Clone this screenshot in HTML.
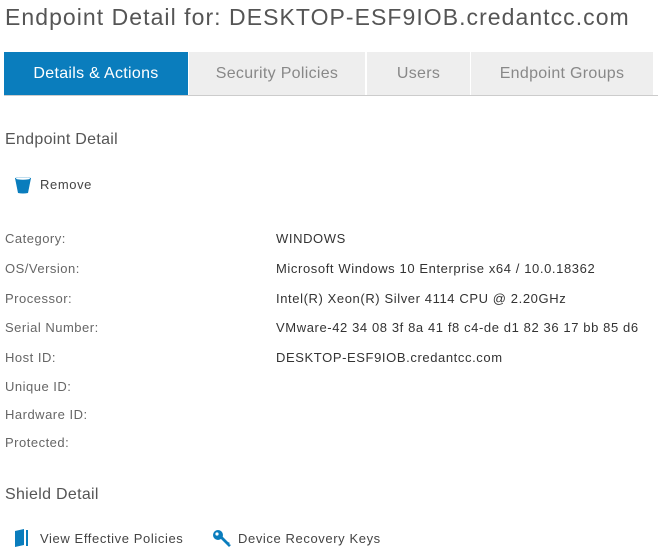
<!DOCTYPE html><html><head><style>
body{margin:0;width:658px;height:552px;background:#fff;font-family:"Liberation Sans",sans-serif;color:#444;position:relative;overflow:hidden}
.a{position:absolute;white-space:nowrap}
h1{position:absolute;left:5px;top:4px;margin:0;font-weight:normal;font-size:23px;color:#555;letter-spacing:1.05px}
.tab{position:absolute;top:52px;height:44px;line-height:44px;text-align:center;font-size:16px;background:#eee;color:#888;letter-spacing:0.3px}
.l{font-size:13px;color:#666;letter-spacing:0.5px}
.v{font-size:13px;color:#333;left:276px;letter-spacing:0.6px}
</style></head><body>
<h1>Endpoint Detail for: DESKTOP-ESF9IOB.credantcc.com</h1>
<div class="tab" style="left:4px;width:184px;background:#0a7dbd;color:#fff">Details &amp; Actions</div>
<div class="tab" style="left:189px;width:176px">Security Policies</div>
<div class="tab" style="left:367px;width:103px">Users</div>
<div class="tab" style="left:471px;width:182px">Endpoint Groups</div>
<div class="a" style="left:4px;top:95px;width:654px;height:1px;background:#ccc"></div>
<div class="a" style="left:5px;top:131px;font-size:16px;color:#555;letter-spacing:0.3px">Endpoint Detail</div>
<svg class="a" style="left:14px;top:176px" width="18" height="18" viewBox="0 0 18 18"><path d="M1 2 Q9 0 17 2 L14 17 Q9 18 4 17Z" fill="#0a7dbd"/><ellipse cx="9" cy="2.5" rx="7" ry="1.3" fill="#fff"/></svg>
<div class="a" style="left:40px;top:177px;font-size:13px;color:#444;letter-spacing:0.6px">Remove</div>
<div class="a l" style="left:5px;top:231px">Category:</div><div class="a v" style="top:231px">WINDOWS</div>
<div class="a l" style="left:5px;top:261px">OS/Version:</div><div class="a v" style="top:261px">Microsoft Windows 10 Enterprise x64 / 10.0.18362</div>
<div class="a l" style="left:5px;top:291px">Processor:</div><div class="a v" style="top:291px">Intel(R) Xeon(R) Silver 4114 CPU @ 2.20GHz</div>
<div class="a l" style="left:5px;top:320px">Serial Number:</div><div class="a v" style="top:320px">VMware-42 34 08 3f 8a 41 f8 c4-de d1 82 36 17 bb 85 d6</div>
<div class="a l" style="left:5px;top:350px">Host ID:</div><div class="a v" style="top:350px">DESKTOP-ESF9IOB.credantcc.com</div>
<div class="a l" style="left:5px;top:379px">Unique ID:</div>
<div class="a l" style="left:5px;top:407px">Hardware ID:</div>
<div class="a l" style="left:5px;top:435px">Protected:</div>
<div class="a" style="left:5px;top:486px;font-size:16px;color:#555;letter-spacing:0.3px">Shield Detail</div>
<svg class="a" style="left:14px;top:529px" width="16" height="18" viewBox="0 0 16 18"><path d="M1 2 L10 0 L10 16 L1 18Z" fill="#0a7dbd"/><rect x="12" y="1" width="2" height="16" fill="#0a7dbd"/></svg>
<div class="a" style="left:40px;top:531px;font-size:13px;color:#444;letter-spacing:0.6px">View Effective Policies</div>
<svg class="a" style="left:212px;top:529px" width="20" height="20" viewBox="0 0 20 20"><circle cx="6" cy="6" r="5" fill="#0a7dbd"/><circle cx="5" cy="5" r="1.6" fill="#fff"/><path d="M8 9 L17 18 L19 16 L17 15 L18 14 L16 13 L10 7Z" fill="#0a7dbd"/></svg>
<div class="a" style="left:238px;top:531px;font-size:13px;color:#444;letter-spacing:0.6px">Device Recovery Keys</div>
</body></html>
